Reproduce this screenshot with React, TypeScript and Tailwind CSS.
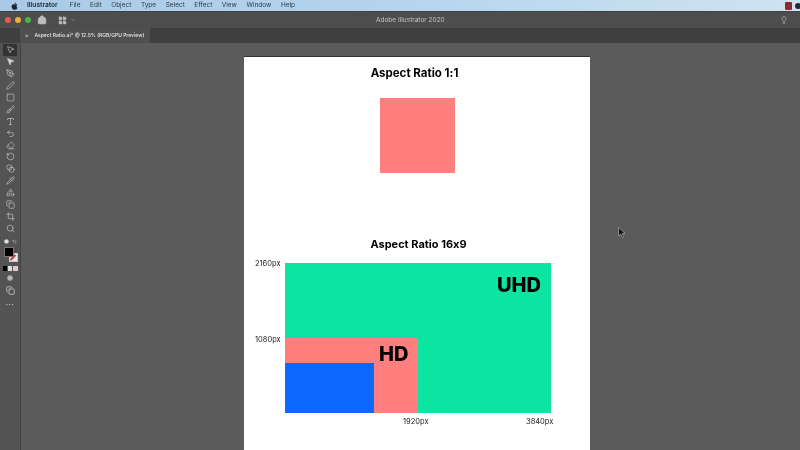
import {
  ChevronDown,
  Home,
  Lightbulb,
  LayoutGrid,
  MousePointer2,
  Pen,
  PenTool,
  Square,
  Brush,
  Type,
  Undo2,
  Eraser,
  RotateCcw,
  Blend,
  Pipette,
  Shapes,
  Crop,
  Search,
  Copy,
  Circle,
} from 'lucide-react'

const menus = ['File', 'Edit', 'Object', 'Type', 'Select', 'Effect', 'View', 'Window', 'Help']

const tools = [
  MousePointer2,
  MousePointer2,
  PenTool,
  Pen,
  Square,
  Brush,
  Type,
  Undo2,
  Eraser,
  RotateCcw,
  Blend,
  Pipette,
  Shapes,
  Copy,
  Crop,
  Search,
]

function MenuBar() {
  return (
    <div className="flex h-[11px] items-center bg-gradient-to-r from-[#a9c9e6] via-[#b5d5ee] to-[#cfe3ef] pl-[11px] text-[6.5px] text-[#2c3a47]">
      <svg width="7" height="8" viewBox="0 0 14 16" className="mr-[9px] fill-[#1d2530]">
        <path d="M11.2 8.5c0-1.700 1.400-2.500 1.500-2.600-.8-1.200-2.100-1.400-2.500-1.400-1.100-.1-2.100.6-2.700.6-.6 0-1.400-.6-2.300-.6C3.500 4.500 2.400 5.200 1.800 6.300.5 8.500 1.500 11.800 2.700 13.600c.6.900 1.300 1.900 2.300 1.800.9 0 1.300-.6 2.400-.6s1.400.6 2.400.6 1.600-.9 2.200-1.800c.7-1 1-2 1-2.100-.1 0-1.800-.7-1.800-3zM9.400 3.300c.5-.6.800-1.400.7-2.300-.7 0-1.600.5-2.100 1.100-.5.500-.9 1.400-.8 2.200.8.100 1.700-.4 2.200-1z" />
      </svg>
      <span className="mr-[12px] font-bold">Illustrator</span>
      <div className="flex gap-[9.550px]">
        {menus.map((m) => (
          <span key={m}>{m}</span>
        ))}
      </div>
      <div className="ml-auto mr-[-1px] flex items-center gap-[3px]">
        <div className="h-[8px] w-[7px] rounded-[1px] bg-[#8e2a2c]" />
        <div className="h-[6px] w-[6px] rounded-full bg-[#1f2c33]" />
      </div>
    </div>
  )
}

function TitleBar() {
  return (
    <div className="relative flex h-[17px] items-center border-t border-[#3d4346] bg-[#4d4d4d] pl-[5px] text-[#cfcfcf]">
      <div className="flex items-center gap-[4px]">
        <div className="h-[6px] w-[6px] rounded-full bg-[#ea5a50]" />
        <div className="h-[6px] w-[6px] rounded-full bg-[#eab13a]" />
        <div className="h-[6px] w-[6px] rounded-full bg-[#4cb748]" />
      </div>
      <Home size={10} fill="#bdbdbd" className="ml-[6px] text-[#bdbdbd]" />
      <LayoutGrid size={9} fill="#bdbdbd" className="ml-[11px] text-[#bdbdbd]" />
      <ChevronDown size={6} className="ml-[3px] text-[#a5a5a5]" />
      <span className="absolute left-[376px] top-[4px] text-[6.5px] text-[#c4c4c4]">Adobe Illustrator 2020</span>
      <Lightbulb size={8} className="absolute left-[780px] top-[4px] text-[#bcbcbc]" />
    </div>
  )
}

function TabBar() {
  return (
    <div className="flex h-[15px] bg-[#3f3f3f] pl-[20px]">
      <div className="flex w-[130px] items-center bg-[#4f4f4f] pl-[5px] text-[5px] font-semibold whitespace-nowrap text-[#dedede]">
        <span className="mr-[6px] text-[#c8c8c8]">×</span>
        Aspect Ratio.ai* @ 12.5% (RGB/GPU Preview)
      </div>
    </div>
  )
}

function ToolBar() {
  return (
    <div className="flex w-[21px] shrink-0 flex-col items-center border-r border-[#434343] bg-[#535353] pt-[1px] text-[#d0d0d0]">
      {tools.map((Icon, i) => (
        <div key={i} className={`flex h-[11.9px] w-[14px] items-center justify-center ${i === 0 ? 'bg-[#333333]' : ''}`}>
          <Icon size={9} strokeWidth={1.6} fill={i === 1 ? '#d0d0d0' : 'none'} />
        </div>
      ))}
      <div className="mt-[1px] flex h-[12px] items-center gap-[3px]">
        <Circle size={5} fill="#e0e0e0" />
        <Undo2 size={5} />
      </div>
      <div className="relative h-[15px] w-[15px]">
        <div className="absolute bottom-0 right-0 h-[9px] w-[9px] border border-[#c9c9c9] bg-[#f4e9e9]">
          <div className="mx-auto h-full w-[2px] rotate-45 bg-[#c53a3a]" />
        </div>
        <div className="absolute left-[1px] top-0 h-[10px] w-[10px] border border-[#777777] bg-black" />
      </div>
      <div className="mt-[2px] flex h-[8px] items-center gap-[1px]">
        <div className="h-[5px] w-[4px] bg-black" />
        <div className="h-[5px] w-[4px] bg-[#dddddd]" />
        <div className="h-[5px] w-[5px] bg-[#e7c5c5]" />
      </div>
      <Circle size={6} fill="#b5b5b5" className="mt-[3px] text-[#b5b5b5]" />
      <Copy size={9} className="mt-[5px]" />
      <div className="mt-[6px] text-[7px] leading-[7px] font-bold tracking-[0.5px]">···</div>
    </div>
  )
}

function Artboard() {
  return (
    <div className="ml-[223px] mt-[13px] h-[420px] w-[346px] shrink-0 border-t border-[#333333] bg-white text-black [font-family:Inter,'Liberation_Sans',sans-serif] [font-feature-settings:'calt'_0]">
      <h2 className="mt-[9px] -translate-x-[2.500px] text-center text-[11.5px] leading-[14px] font-bold">Aspect Ratio 1:1</h2>
      <div className="mx-auto mt-[18px] h-[75px] w-[75px] bg-[#ff7f7e]" />
      <h2 className="mt-[64px] translate-x-[1.500px] text-center text-[11px] leading-[14px] font-bold">Aspect Ratio 16x9</h2>
      <div className="relative ml-[40.500px] mt-[12px] h-[150px] w-[266.500px]">
        <span className="absolute left-[-29.500px] top-[-4px] text-[7.500px] leading-[10px] text-[#222222]">2160px</span>
        <span className="absolute left-[-29.500px] top-[72px] text-[7.500px] leading-[10px] text-[#222222]">1080px</span>
        <span className="absolute left-[118.500px] top-[154px] text-[7.500px] leading-[10px] text-[#222222]">1920px</span>
        <span className="absolute left-[241.500px] top-[154px] text-[7.500px] leading-[10px] text-[#222222]">3840px</span>
        <div className="flex h-full flex-col justify-end bg-[#0ce5a1]">
          <div className="h-[75px] w-[133.500px] bg-[#ff7f7e] pt-[25px]">
            <div className="h-[50px] w-[89px] bg-[#0e67ff]" />
          </div>
        </div>
        <span className="absolute left-[212.500px] top-[10px] text-[20px] leading-[24px] font-extrabold">UHD</span>
        <span className="absolute left-[94.500px] top-[79px] text-[20px] leading-[24px] font-extrabold">HD</span>
      </div>
    </div>
  )
}

export default function App() {
  return (
    <div className="relative flex h-[450px] w-[800px] flex-col overflow-hidden bg-[#5b5b5b] blur-[0.35px] [font-family:Inter,'Liberation_Sans',sans-serif]">
      <MenuBar />
      <TitleBar />
      <TabBar />
      <div className="flex min-h-0 flex-1">
        <ToolBar />
        <Artboard />
      </div>
      {/* mouse cursor */}
      <svg width="8" height="11" viewBox="0 0 8 11" className="absolute left-[618px] top-[227px]">
        <path d="M0.500 0.500 L0.500 9 L2.700 7 L4.200 10.300 L5.600 9.700 L4.200 6.500 L7 6.300 Z" fill="#111111" stroke="#dddddd" strokeWidth="0.5" />
      </svg>
    </div>
  )
}
